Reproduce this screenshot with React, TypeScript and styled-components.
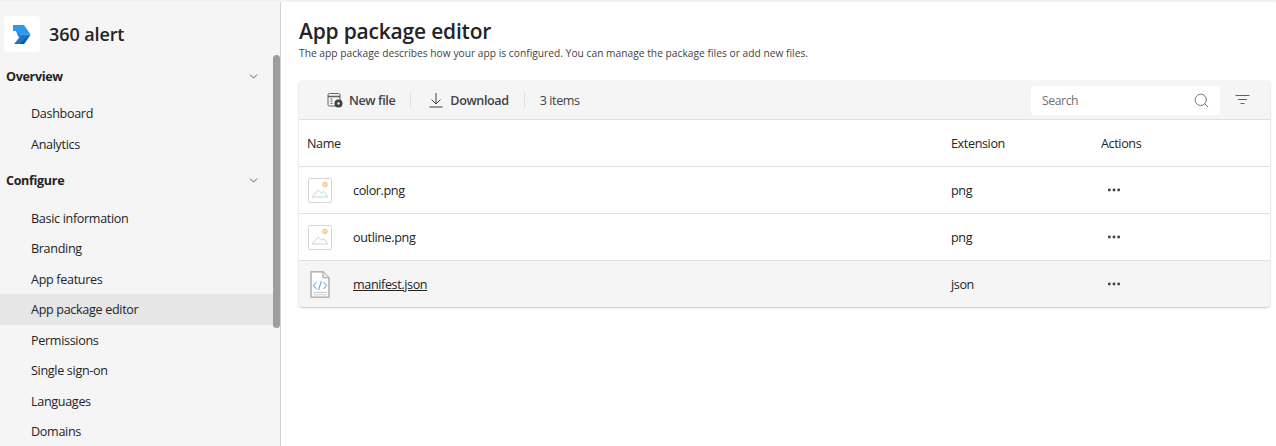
import React from "react";
import styled, { createGlobalStyle } from "styled-components";
import { ChevronDown, Search, MoreHorizontal } from "lucide-react";

const Global = createGlobalStyle`
  html, body { margin: 0; padding: 0; background: #fff; }
  body { font-family: "Open Sans", "Noto Sans", sans-serif; color: #242424; overflow: hidden; }
  * { box-sizing: border-box; }
`;

const Page = styled.div`
  width: 1276px;
  height: 446px;
  display: flex;
  overflow: hidden;
  position: relative;
  &::before {
    content: "";
    position: absolute;
    inset: 0 0 auto 0;
    height: 2px;
    background: linear-gradient(#ebebeb, #f8f8f8);
    z-index: 2;
  }
`;

const Sidebar = styled.aside`
  width: 281px;
  height: 446px;
  flex: none;
  background: #f5f5f5;
  border-right: 1px solid #d1d1d1;
  position: relative;
  overflow: hidden;
  padding-top: 16px;
`;

const Brand = styled.div`
  display: flex;
  align-items: center;
  gap: 9px;
  padding-left: 4px;
  height: 36px;
`;

const LogoTile = styled.div`
  width: 36px;
  height: 36px;
  border-radius: 4px;
  background: #fff;
  display: flex;
  align-items: center;
  justify-content: center;
`;

const BrandName = styled.div`
  font-size: 18px;
  font-weight: 600;
  letter-spacing: -0.1px;
  color: #242424;
`;

const Section = styled.div<{ $top: number }>`
  height: 30px;
  margin-top: ${(p) => p.$top}px;
  display: flex;
  align-items: center;
  justify-content: space-between;
  padding: 0 20px 0 6px;
  font-size: 12.6px;
  font-weight: 700;
  letter-spacing: -0.35px;
`;

const NavList = styled.div<{ $top: number }>`
  margin-top: ${(p) => p.$top}px;
  display: flex;
  flex-direction: column;
`;

const NavItem = styled.div<{ $active?: boolean }>`
  height: 30.55px;
  display: flex;
  align-items: center;
  padding-left: 31px;
  font-size: 12.6px;
  letter-spacing: -0.33px;
  color: #242424;
  background: ${(p) => (p.$active ? "#e6e6e6" : "transparent")};
`;

const ScrollThumb = styled.div`
  position: absolute;
  left: 273px;
  top: 55px;
  width: 7px;
  height: 273px;
  border-radius: 4px;
  background: #9e9e9e;
`;

const Main = styled.main`
  flex: 1;
  min-width: 0;
  padding: 17px 6px 0 18px;
`;

const Title = styled.h1`
  margin: 0;
  font-size: 21px;
  line-height: 29px;
  font-weight: 600;
  letter-spacing: -0.2px;
  color: #242424;
`;

const Subtitle = styled.p`
  margin: 0;
  font-size: 10.2px;
  line-height: 14px;
  letter-spacing: 0.03px;
  color: #424242;
`;

const Panel = styled.section`
  margin-top: 21px;
  border-radius: 4px;
  background: #fff;
  box-shadow: 0 1px 2px rgba(0, 0, 0, 0.2), 0 0 2px rgba(0, 0, 0, 0.1);
  overflow: hidden;
`;

const Toolbar = styled.div`
  height: 38px;
  background: #f5f5f5;
  display: flex;
  align-items: center;
  padding: 0 20px 0 28px;
  font-size: 12.6px;
  letter-spacing: -0.4px;
  color: #424242;
`;

const ToolButton = styled.div<{ $lead?: number }>`
  display: flex;
  align-items: center;
  gap: 6px;
  padding-left: ${(p) => p.$lead ?? 0}px;
  font-weight: 600;
  color: #424242;
`;

const Divider = styled.span`
  width: 1px;
  height: 16px;
  background: #e0e0e0;
  margin: 0 15px;
`;

const SearchBox = styled.div`
  margin-left: auto;
  width: 189px;
  height: 29px;
  border-radius: 4px;
  background: #fff;
  display: flex;
  align-items: center;
  justify-content: space-between;
  padding: 0 10px 0 11px;
  color: #707070;
  font-size: 12.2px;
`;

const FilterButton = styled.div`
  width: 15px;
  margin-left: 15px;
  display: flex;
`;

const Row = styled.div<{ $hover?: boolean }>`
  height: 47px;
  display: grid;
  grid-template-columns: 652px 150px 1fr;
  align-items: center;
  border-top: 1px solid #e0e0e0;
  background: ${(p) => (p.$hover ? "#f5f5f5" : "#fff")};
  font-size: 12.6px;
  letter-spacing: -0.38px;
  color: #242424;
`;

const NameCell = styled.div<{ $head?: boolean }>`
  display: flex;
  align-items: center;
  padding-left: ${(p) => (p.$head ? 8 : 9)}px;
  gap: 21px;
`;

const IconSlot = styled.div`
  width: 24px;
  display: flex;
  justify-content: center;
`;

const FileLink = styled.span<{ $link?: boolean }>`
  text-decoration: ${(p) => (p.$link ? "underline" : "none")};
`;

const ActionDots = styled.div`
  padding-left: 5px;
  display: flex;
  color: #424242;
`;

const Logo = () => (
  <svg width="18" height="19" viewBox="0 0 18 19">
    <path d="M0 0h11l6.5 9.500H8.500L5.500 6H0z" fill="#2a9bea" />
    <path d="M3 6h2.500l3 3.500L6 13z" fill="#1f86d8" />
    <path d="M8.500 9.500h9L11 19H1l5-6z" fill="#1b78c8" />
    <path d="M17.500 9.500L11 19H6z" fill="#11599f" />
  </svg>
);

const ImageFile = () => (
  <svg width="24" height="25" viewBox="0 0 24 25" fill="none">
    <rect x="0.5" y="0.5" width="23" height="24" rx="1.5" fill="#fff" stroke="#d4d4d4" />
    <circle cx="17" cy="6.500" r="2.300" fill="#fbd9a8" stroke="#f6b867" strokeWidth="0.8" />
    <path d="M4 19l6-7 3.500 3 2.500-1.500 4 5.500z" fill="#fbfdfc" stroke="#c4dcd4" strokeWidth="1" />
  </svg>
);

const CodeFile = () => (
  <svg width="20" height="27" viewBox="0 0 20 27" fill="none">
    <path d="M1 .8h12l6 6v19.400H1z" fill="#fff" stroke="#a3a3a3" strokeWidth="1.300" />
    <path d="M13 .8v6h6" fill="#ececec" stroke="#a3a3a3" strokeWidth="1.100" />
    <path d="M6.500 11l-3 3.500 3 3.500M13.500 11l3 3.500-3 3.500M11.300 10l-2.600 9" stroke="#6fb0e8" strokeWidth="1.100" />
    <path d="M3.500 21.500h13M3.500 23.800h13" stroke="#c8c8c8" />
  </svg>
);

const NewFile = () => (
  <svg width="16" height="16" viewBox="0 0 16 16" fill="none">
    <rect x="1" y="1.500" width="12" height="12.500" rx="1.500" stroke="#616161" fill="#f5f5f5" />
    <path d="M1 4.500h12" stroke="#616161" strokeWidth="1.500" />
    <path d="M3.500 7h2M3.500 9.200h2M3.500 11.400h2" stroke="#616161" />
    <circle cx="11.500" cy="11.500" r="4" fill="#424242" />
    <circle cx="11.500" cy="11.500" r="1.200" fill="#f5f5f5" />
  </svg>
);

const DownloadIcon = () => (
  <svg width="16" height="16" viewBox="0 0 16 16" fill="none" stroke="#424242">
    <path d="M8 1v11M3.500 7.500L8 12l4.500-4.500M1.500 15h13" />
  </svg>
);

const Filter = () => (
  <svg width="15" height="12" viewBox="0 0 15 12" fill="none" stroke="#616161">
    <path d="M0.500 1.500h14M3 5.500h9M5.500 9.500h4" />
  </svg>
);

const files = [
  { name: "color.png", ext: "png", code: false },
  { name: "outline.png", ext: "png", code: false },
  { name: "manifest.json", ext: "json", code: true },
];

export default function App() {
  return (
    <Page>
      <Global />
      <Sidebar>
        <Brand>
          <LogoTile><Logo /></LogoTile>
          <BrandName>360 alert</BrandName>
        </Brand>
        <Section $top={9}>
          Overview
          <ChevronDown size={13} strokeWidth={1.5} color="#424242" />
        </Section>
        <NavList $top={7.4}>
          <NavItem>Dashboard</NavItem>
          <NavItem>Analytics</NavItem>
        </NavList>
        <Section $top={6.3}>
          Configure
          <ChevronDown size={13} strokeWidth={1.5} color="#424242" />
        </Section>
        <NavList $top={7}>
          <NavItem>Basic information</NavItem>
          <NavItem>Branding</NavItem>
          <NavItem>App features</NavItem>
          <NavItem $active>App package editor</NavItem>
          <NavItem>Permissions</NavItem>
          <NavItem>Single sign-on</NavItem>
          <NavItem>Languages</NavItem>
          <NavItem>Domains</NavItem>
        </NavList>
        <ScrollThumb />
      </Sidebar>
      <Main>
        <Title>App package editor</Title>
        <Subtitle>The app package describes how your app is configured. You can manage the package files or add new files.</Subtitle>
        <Panel>
          <Toolbar>
            <ToolButton><NewFile />New file</ToolButton>
            <Divider />
            <ToolButton $lead={2}><DownloadIcon />Download</ToolButton>
            <Divider />
            <span>3 items</span>
            <SearchBox>
              Search
              <Search size={17} strokeWidth={1.2} color="#616161" />
            </SearchBox>
            <FilterButton><Filter /></FilterButton>
          </Toolbar>
          <Row>
            <NameCell $head>Name</NameCell>
            <div>Extension</div>
            <div>Actions</div>
          </Row>
          {files.map((f, i) => (
            <Row key={f.name} $hover={i === 2}>
              <NameCell>
                <IconSlot>{f.code ? <CodeFile /> : <ImageFile />}</IconSlot>
                <FileLink $link={i === 2}>{f.name}</FileLink>
              </NameCell>
              <div>{f.ext}</div>
              <ActionDots><MoreHorizontal size={16} strokeWidth={2.4} /></ActionDots>
            </Row>
          ))}
        </Panel>
      </Main>
    </Page>
  );
}
